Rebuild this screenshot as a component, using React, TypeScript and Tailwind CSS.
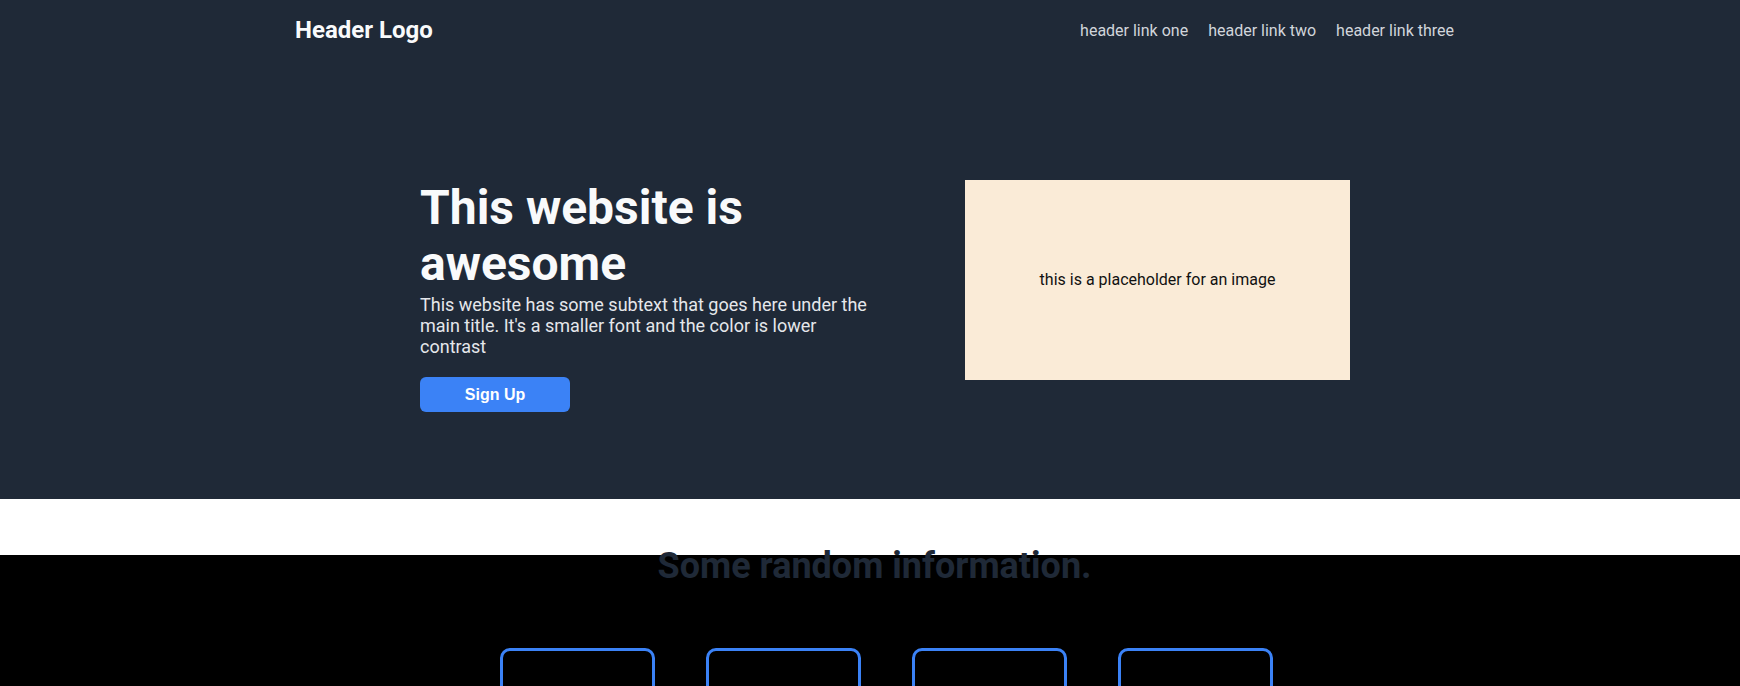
import React from "react";

export default function App() {
  return (
    <div className="min-h-screen bg-black" style={{ fontFamily: "Roboto, 'Noto Sans', sans-serif" }}>
      <div className="bg-[#1f2937]">
        <header className="flex h-[60px] items-center justify-between pl-[295px] pr-[286px]">
          <div className="text-2xl font-bold text-[#f9fafb]">Header Logo</div>
          <nav className="flex gap-5 pt-[1px] text-base text-[#d1d5db]">
            <a>header link one</a>
            <a>header link two</a>
            <a>header link three</a>
          </nav>
        </header>
        <section className="flex items-start gap-[55px] pl-[420px] pt-[120px] pb-[87px]">
          <div className="flex w-[490px] flex-col items-start">
            <h1 className="text-5xl leading-[56px] font-bold text-[#f9fafb]">This website is awesome</h1>
            <p className="mt-[2px] w-[455px] text-lg leading-[21px] text-[#e5e7eb]">
              This website has some subtext that goes here under the main title. It's a smaller font and the color
              is lower contrast
            </p>
            <button
              className="mt-[20px] h-[35px] w-[150px] rounded-md bg-[#3b82f6] text-base font-bold text-white"
              style={{ fontFamily: "'Liberation Sans', Arial, sans-serif" }}
            >
              Sign Up
            </button>
          </div>
          <div className="flex h-[200px] w-[385px] items-center justify-center bg-[#faebd7] text-base text-[#111]">
            this is a placeholder for an image
          </div>
        </section>
      </div>
      <div className="h-[56px] bg-white" />
      <section className="flow-root bg-black">
        <h2 className="relative -mt-[9px] pl-[9px] text-center text-4xl font-bold text-[#1f2937]">
          Some random information.
        </h2>
        <div className="mt-[62px] flex gap-[51px] pl-[500px]">
          <div className="h-[155px] w-[155px] rounded-[10px] border-[3px] border-[#3b82f6]" />
          <div className="h-[155px] w-[155px] rounded-[10px] border-[3px] border-[#3b82f6]" />
          <div className="h-[155px] w-[155px] rounded-[10px] border-[3px] border-[#3b82f6]" />
          <div className="h-[155px] w-[155px] rounded-[10px] border-[3px] border-[#3b82f6]" />
        </div>
      </section>
    </div>
  );
}
